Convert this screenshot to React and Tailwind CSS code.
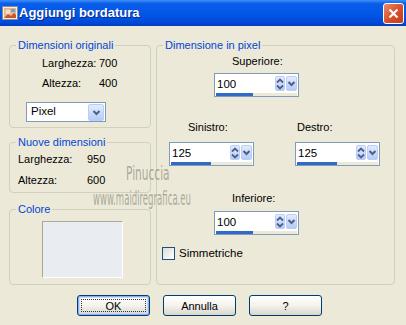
import React from "react";

const Chevron = () => (
  <svg width="9" height="9" viewBox="0 0 9 9">
    <path d="M1.5 3 L4.5 6 L7.5 3" fill="none" stroke="#4d6185" strokeWidth="2" />
  </svg>
);

const UpDown = () => (
  <svg width="8" height="14" viewBox="0 0 8 14">
    <path d="M1 5.5 L4 2.5 L7 5.5" fill="none" stroke="#4d6185" strokeWidth="1.8" />
    <path d="M1 8.5 L4 11.5 L7 8.5" fill="none" stroke="#4d6185" strokeWidth="1.8" />
  </svg>
);

const BlueBtn = ({ children, className = "" }) => (
  <div
    className={`flex items-center justify-center rounded-[2px] border border-[#b9cdf8] bg-linear-to-b from-[#e3ebfe] to-[#b7cbf8] ${className}`}
  >
    {children}
  </div>
);

const Spin = ({ value, fill }) => (
  <div className="w-[85px] h-[24px] border border-[#7f9db9] bg-white flex flex-col">
    <div className="flex items-center h-[18px] pl-[2px] pr-[1px] pt-[1px]">
      <span className="flex-1 text-[11.5px] leading-[14px] text-black">{value}</span>
      <BlueBtn className="w-[10px] h-[15px]">
        <UpDown />
      </BlueBtn>
      <BlueBtn className="w-[11px] h-[15px] ml-[1px]">
        <Chevron />
      </BlueBtn>
    </div>
    <div className="h-[3px] mx-[1px] mt-[1px] bg-[#ece9d8] flex">
      <div className={`h-full bg-[#316ac5] ${fill}`} />
    </div>
  </div>
);

const Group = ({ title, className = "", children }) => (
  <fieldset className={`border border-[#d0d0bf] rounded-[4px] ${className}`}>
    <legend className="ml-[6px] px-[2px] text-[11px] leading-[12px] text-[#0046d5]">{title}</legend>
    {children}
  </fieldset>
);

const XpButton = ({ label, primary }) => (
  <button
    className={`relative w-[73px] h-[21px] rounded-[3px] border border-[#003c74] bg-linear-to-b from-white via-[#f4f3ee] to-[#d9d5c8] text-[11px] text-black ${
      primary ? "shadow-[inset_0_0_0_1px_#8fb0ee,inset_0_0_0_2px_#c7d8f8]" : ""
    }`}
  >
    {primary && (
      <span className="absolute inset-[3px] border border-dotted border-[#333]" />
    )}
    <span className="relative">{label}</span>
  </button>
);

export default function App() {
  return (
    <div className="relative w-[406px] h-[325px] bg-[#ece9d8] font-['Liberation_Sans',Arial,sans-serif] text-[11px] text-black overflow-hidden">
      {/* Title bar */}
      <div className="h-[26px] flex items-center bg-[linear-gradient(to_bottom,#3d8ff9_0%,#0a5ee9_14%,#0056e6_55%,#0049d8_88%,#003db9_100%)]">
        <svg width="16" height="16" viewBox="0 0 16 16" className="ml-[2px]">
          <rect x="0.5" y="1.5" width="15" height="13" fill="#f3efe4" stroke="#8c8c8c" />
          <rect x="2" y="3" width="12" height="10" fill="#e8b48a" />
          <circle cx="6" cy="7" r="2.5" fill="#f6dcc2" />
          <path d="M2 13 L6 9 L9 11 L12 8 L14 10 L14 13 Z" fill="#c5562c" />
          <rect x="9" y="4" width="4" height="3" fill="#6fa0d8" />
        </svg>
        <span className="ml-[1px] text-[13px] font-bold text-white [text-shadow:1px_1px_0_#0a2a8a]">
          Aggiungi bordatura
        </span>
        <div className="ml-auto mr-[2px] w-[21px] h-[21px] rounded-[3px] border border-white bg-linear-to-br from-[#e98a6a] via-[#d9512c] to-[#c23c19] flex items-center justify-center">
          <svg width="11" height="11" viewBox="0 0 11 11">
            <path d="M1.5 1.5 L9.5 9.5 M9.5 1.5 L1.5 9.5" stroke="white" strokeWidth="2.2" />
          </svg>
        </div>
      </div>

      <div className="flex pt-[13px] pl-[9px] gap-[5px]">
        {/* Left column */}
        <div className="w-[142px] flex flex-col">
          <Group title="Dimensioni originali">
            <div className="flex flex-col pt-[6px] pb-[5px]">
              <div className="flex pl-[32px] leading-[13px]">
                <span className="w-[57px]">Larghezza:</span>
                <span>700</span>
              </div>
              <div className="flex pl-[32px] leading-[13px] mt-[7px]">
                <span className="w-[57px]">Altezza:</span>
                <span>400</span>
              </div>
              <div className="ml-[16px] mt-[12px] w-[80px] h-[20px] border border-[#7f9db9] bg-white flex items-center pl-[4px] pr-[1px]">
                <span className="flex-1 text-[11.5px]">Pixel</span>
                <BlueBtn className="w-[16px] h-[17px]">
                  <Chevron />
                </BlueBtn>
              </div>
            </div>
          </Group>

          <Group title="Nuove dimensioni" className="mt-[8px]">
            <div className="flex flex-col pt-[5px] pb-[5px]">
              <div className="flex pl-[8px] leading-[13px]">
                <span className="w-[69px]">Larghezza:</span>
                <span>950</span>
              </div>
              <div className="flex pl-[8px] leading-[13px] mt-[8px]">
                <span className="w-[69px]">Altezza:</span>
                <span>600</span>
              </div>
            </div>
          </Group>

          <Group title="Colore" className="mt-[10px]">
            <div className="pt-[6px] pb-[6px]">
              <div className="ml-[32px] w-[81px] h-[57px] bg-[#e9edf2] border border-t-[#aca899] border-l-[#aca899] border-b-white border-r-white" />
            </div>
          </Group>
        </div>

        {/* Right column */}
        <Group title="Dimensione in pixel" className="w-[239px]">
          <div className="flex flex-col pt-[4px] pb-[22px]">
            <span className="ml-[75px] leading-[13px]">Superiore:</span>
            <div className="ml-[57px] mt-[5px]">
              <Spin value="100" fill="w-[37px]" />
            </div>

            <div className="flex mt-[24px]">
              <div className="flex flex-col ml-[12px]">
                <span className="ml-[19px] leading-[13px]">Sinistro:</span>
                <div className="mt-[8px]">
                  <Spin value="125" fill="w-[40px]" />
                </div>
              </div>
              <div className="flex flex-col ml-[41px]">
                <span className="ml-[2px] leading-[13px]">Destro:</span>
                <div className="mt-[8px]">
                  <Spin value="125" fill="w-[40px]" />
                </div>
              </div>
            </div>

            <span className="ml-[75px] mt-[26px] leading-[13px]">Inferiore:</span>
            <div className="ml-[57px] mt-[6px]">
              <Spin value="100" fill="w-[37px]" />
            </div>

            <div className="flex items-center ml-[5px] mt-[10px]">
              <div className="w-[13px] h-[13px] border border-[#1c5180] bg-linear-to-br from-[#dcdcd7] to-white" />
              <span className="ml-[4px] text-[11.5px]">Simmetriche</span>
            </div>
          </div>
        </Group>
      </div>

      {/* Buttons */}
      <div className="flex gap-[13px] pl-[77px] mt-[10px]">
        <XpButton label="OK" primary />
        <XpButton label="Annulla" />
        <XpButton label="?" />
      </div>

      {/* Watermark */}
      <div className="absolute left-[126px] top-[163px] text-[19px] leading-[20px] text-[#8d897d]/70 font-['DejaVu_Sans_Condensed','DejaVu_Sans',sans-serif] scale-x-[0.62] origin-left pointer-events-none">
        Pinuccia
      </div>
      <div className="absolute left-[93px] top-[188px] text-[19px] leading-[20px] text-[#8d897d]/70 font-['DejaVu_Sans_Condensed','DejaVu_Sans',sans-serif] scale-x-[0.5] origin-left pointer-events-none">
        www.maidiregrafica.eu
      </div>
    </div>
  );
}
